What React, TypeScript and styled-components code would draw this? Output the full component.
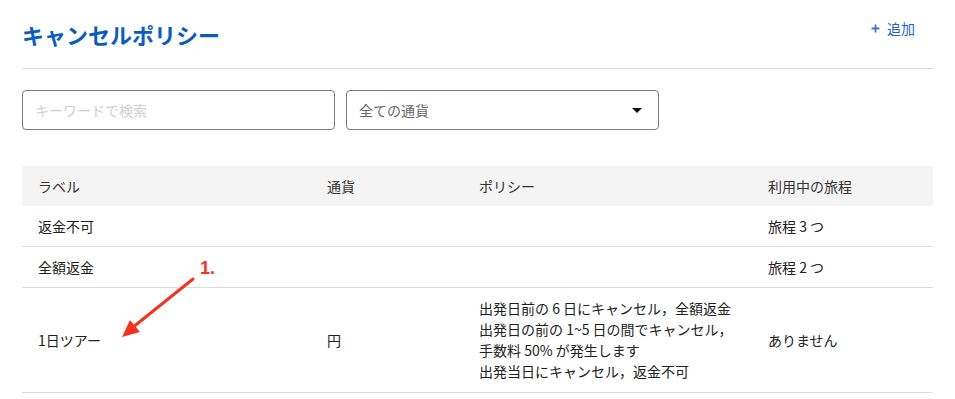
import React from "react";
import styled, { createGlobalStyle } from "styled-components";

const Global = createGlobalStyle`
  html, body { margin: 0; padding: 0; background: #fff; }
  body {
    font-family: "Noto Sans CJK JP", "Noto Sans", "Liberation Sans", sans-serif;
    color: #222;
  }
  * { box-sizing: border-box; }
`;

const Page = styled.div`
  position: relative;
  padding: 0 22px;
  width: 955px;
`;

const Header = styled.header`
  display: flex;
  justify-content: space-between;
  align-items: center;
  height: 69px;
  border-bottom: 1px solid #dcdcdc;
`;

const Title = styled.h1`
  margin: 0;
  font-size: 22px;
  font-weight: 700;
  color: #0b5cbf;
  line-height: 1;
`;

const AddButton = styled.button`
  border: none;
  background: none;
  font-family: inherit;
  font-size: 14px;
  color: #1a66c4;
  padding: 0 18px 0 0;
  margin-bottom: 12px;
  display: flex;
  align-items: center;
  gap: 7px;
  cursor: pointer;
`;

const PlusIcon = styled.svg`
  display: block;
`;

const Filters = styled.div`
  display: flex;
  gap: 11px;
  margin-top: 21px;
`;

const Field = styled.div`
  width: 313px;
  height: 40px;
  border: 1px solid #7a7a7a;
  border-radius: 4px;
  display: flex;
  align-items: center;
  justify-content: space-between;
  padding: 0 12px;
  font-size: 14px;
`;

const Placeholder = styled.span`
  color: #cfcfcf;
`;

const SelectText = styled.span`
  color: #666;
`;

const Caret = styled.span`
  width: 0;
  height: 0;
  border-left: 5px solid transparent;
  border-right: 5px solid transparent;
  border-top: 5px solid #111;
  margin-right: 4px;
`;

const Table = styled.table`
  margin-top: 36px;
  width: 911px;
  border-collapse: collapse;
  table-layout: fixed;
  font-size: 14px;
`;

const Th = styled.th<{ w: number }>`
  width: ${(p) => p.w}px;
  background: #f4f4f4;
  text-align: left;
  font-weight: 400;
  color: #333;
  padding: 10px 16px;
  line-height: 20px;
`;

const Tr = styled.tr`
  border-bottom: 1px solid #dcdcdc;
`;

const Td = styled.td`
  padding: 10px 16px;
  line-height: 20px;
  color: #222;
  vertical-align: middle;
`;

const PolicyLine = styled.div`
  line-height: 21px;
  white-space: nowrap;
`;

const Annotation = styled.svg`
  position: absolute;
  left: 110px;
  top: 250px;
  overflow: visible;
`;

const rows = [
  { label: "返金不可", currency: "", policy: [] as string[], usage: "旅程 3 つ" },
  { label: "全額返金", currency: "", policy: [] as string[], usage: "旅程 2 つ" },
  {
    label: "1日ツアー",
    currency: "円",
    policy: [
      "出発日前の 6 日にキャンセル，全額返金",
      "出発日の前の 1~5 日の間でキャンセル，",
      "手数料 50% が発生します",
      "出発当日にキャンセル，返金不可",
    ],
    usage: "ありません",
  },
];

export default function App() {
  return (
    <>
      <Global />
      <Page>
        <Header>
          <Title>キャンセルポリシー</Title>
          <AddButton>
            <PlusIcon width="9" height="9" viewBox="0 0 9 9">
              <path d="M4.5 0.5v8M0.5 4.5h8" stroke="#3b7bd0" strokeWidth="1.8" />
            </PlusIcon>
            追加
          </AddButton>
        </Header>
        <Filters>
          <Field>
            <Placeholder>キーワードで検索</Placeholder>
          </Field>
          <Field>
            <SelectText>全ての通貨</SelectText>
            <Caret />
          </Field>
        </Filters>
        <Table>
          <thead>
            <tr>
              <Th w={289}>ラベル</Th>
              <Th w={152}>通貨</Th>
              <Th w={289}>ポリシー</Th>
              <Th w={181}>利用中の旅程</Th>
            </tr>
          </thead>
          <tbody>
            {rows.map((r) => (
              <Tr key={r.label}>
                <Td>{r.label}</Td>
                <Td>{r.currency}</Td>
                <Td>
                  {r.policy.map((l) => (
                    <PolicyLine key={l}>{l}</PolicyLine>
                  ))}
                </Td>
                <Td>{r.usage}</Td>
              </Tr>
            ))}
          </tbody>
        </Table>
        <Annotation width="120" height="100" viewBox="0 0 120 100">
          <text
            x="90"
            y="24"
            fill="#f2341c"
            fontSize="18"
            fontWeight="700"
            fontFamily="'Liberation Sans', Arial, sans-serif"
          >
            1.
          </text>
          <line x1="83" y1="29" x2="22" y2="78" stroke="#f2341c" strokeWidth="3" strokeLinecap="round" />
          <polygon points="12,87 20,70 30,82" fill="#f2341c" />
        </Annotation>
      </Page>
    </>
  );
}
